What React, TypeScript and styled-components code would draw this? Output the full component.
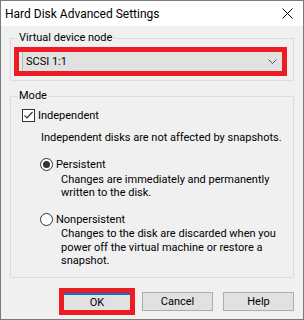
import React from 'react'
import styled, { createGlobalStyle } from 'styled-components'

const font = `Roboto, "Liberation Sans", sans-serif`

const GlobalStyle = createGlobalStyle`
  body{
    margin: 0;
    font-family: ${font};
    font-size: 11px;
    color: #000;
  }
`

const Window = styled.div`
  width: 304px;
  height: 320px;
  box-sizing: border-box;
  border: 1px solid #7a7a7a;
  background-color: #f0f0f0;
  display: flex;
  flex-direction: column;
  overflow: hidden;
`

const TitleBar = styled.div`
  height: 25px;
  flex-shrink: 0;
  background-color: #fff;
  display: flex;
  align-items: center;
  justify-content: space-between;
  padding: 0 10px 0 4px;
`

const Title = styled.span`
  font-size: 12px;
  line-height: 16px;
`

const Body = styled.div`
  flex: 1;
  padding: 4px 9px 0 9px;
  display: flex;
  flex-direction: column;
`

const Group = styled.fieldset<{ $pad: string; $gapTop?: number }>`
  margin: ${p => p.$gapTop || 0}px 0 0 0;
  padding: ${p => p.$pad};
  border: 1px solid #dcdcdc;
  min-width: 0;
`

const Legend = styled.legend<{ $offset: number }>`
  padding: 0 1px;
  margin-left: ${p => p.$offset}px;
  line-height: 16px;
`

const Highlight = styled.div<{ $spaced?: number }>`
  border: 5px solid #ed1c24;
  margin-right: ${p => p.$spaced || 0}px;
`

const ComboBox = styled.div`
  height: 19px;
  background-color: #e1e1e1;
  display: flex;
  align-items: center;
  justify-content: space-between;
  padding: 0 5px 0 7px;
  box-shadow: inset 3px 0 0 #e9e9e9, inset 4px 0 0 #b9b9b9;
`

const Row = styled.div<{ $indent: number; $top: number }>`
  height: 16px;
  display: flex;
  align-items: center;
  gap: 3px;
  white-space: nowrap;
  margin: ${p => p.$top}px 0 0 ${p => p.$indent}px;
`

const Note = styled.div<{ $indent: number; $top: number; $lh?: number }>`
  margin: ${p => p.$top}px 0 0 ${p => p.$indent}px;
  line-height: ${p => p.$lh || 13}px;
  white-space: nowrap;
`

const ButtonRow = styled.div`
  margin-top: 10px;
  display: flex;
  justify-content: flex-end;
  align-items: center;
`

const Button = styled.div<{ $spaced?: number }>`
  width: 71px;
  height: 19px;
  box-sizing: border-box;
  border: 1px solid #adadad;
  background-color: #e1e1e1;
  display: flex;
  align-items: center;
  justify-content: center;
  margin-right: ${p => p.$spaced || 0}px;
`

const DefaultButton = styled.div`
  width: 66px;
  height: 17px;
  box-sizing: border-box;
  border-top: 2px solid #0078d7;
  background-color: #e1e1e1;
  display: flex;
  align-items: center;
  justify-content: center;
`

const CloseIcon = () => (
  <svg width="11" height="11" viewBox="0 0 11 11">
    <path d="M0.5 0.5 L10.5 10.5 M10.5 0.5 L0.5 10.5" stroke="#000" strokeWidth="1" />
  </svg>
)

const Chevron = () => (
  <svg width="9" height="5" viewBox="0 0 9 5">
    <path d="M0.5 0.5 L4.5 4.5 L8.5 0.5" stroke="#555" strokeWidth="1" fill="none" />
  </svg>
)

const CheckBox = () => (
  <svg width="13" height="13" viewBox="0 0 13 13">
    <rect x="0.5" y="0.5" width="12" height="12" fill="#fff" stroke="#333" />
    <path d="M2.5 6.5 L5 9 L10.5 3" stroke="#333" strokeWidth="1.2" fill="none" />
  </svg>
)

const Radio = ({ on }: { on?: boolean }) => (
  <svg width="13" height="13" viewBox="0 0 13 13">
    <circle cx="6.5" cy="6.5" r="6" fill="#fff" stroke="#333" />
    {on && <circle cx="6.5" cy="6.5" r="3.5" fill="#333" />}
  </svg>
)

const App = () => {
  return (
    <>
      <GlobalStyle />
      <Window>
        <TitleBar>
          <Title>Hard Disk Advanced Settings</Title>
          <CloseIcon />
        </TitleBar>
        <Body>
          <Group $pad="1px 6px 4px 3px">
            <Legend $offset={4}>Virtual device node</Legend>
            <Highlight>
              <ComboBox>
                <span>SCSI 1:1</span>
                <Chevron />
              </ComboBox>
            </Highlight>
          </Group>
          <Group $pad="3px 10px 9px 11px" $gapTop={7}>
            <Legend $offset={-4}>Mode</Legend>
            <Row $indent={0} $top={0}>
              <CheckBox />
              Independent
            </Row>
            <Note $indent={19} $top={8}>Independent disks are not affected by snapshots.</Note>
            <Row $indent={18} $top={12}>
              <Radio on />
              Persistent
            </Row>
            <Note $indent={39} $top={1}>
              Changes are immediately and permanently
              <br />
              written to the disk.
            </Note>
            <Row $indent={18} $top={12}>
              <Radio />
              Nonpersistent
            </Row>
            <Note $indent={39} $top={0} $lh={13.5}>
              Changes to the disk are discarded when you
              <br />
              power off the virtual machine or restore a
              <br />
              snapshot.
            </Note>
          </Group>
          <ButtonRow>
            <Highlight $spaced={7}>
              <DefaultButton>OK</DefaultButton>
            </Highlight>
            <Button $spaced={10}>Cancel</Button>
            <Button>Help</Button>
          </ButtonRow>
        </Body>
      </Window>
    </>
  )
}

export default App
